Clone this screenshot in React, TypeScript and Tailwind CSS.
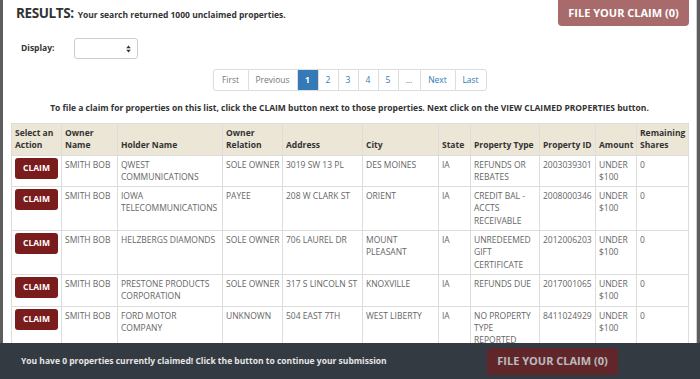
import React from 'react';

interface Row {
  owner: string;
  holder: string;
  relation: string;
  address: string;
  city: string;
  state: string;
  type: string;
  id: string;
  amount: string;
  shares: string;
}

const rows: Row[] = [
  { owner: 'SMITH BOB', holder: 'QWEST COMMUNICATIONS', relation: 'SOLE OWNER', address: '3019 SW 13 PL', city: 'DES MOINES', state: 'IA', type: 'REFUNDS OR REBATES', id: '2003039301', amount: 'UNDER $100', shares: '0' },
  { owner: 'SMITH BOB', holder: 'IOWA TELECOMMUNICATIONS', relation: 'PAYEE', address: '208 W CLARK ST', city: 'ORIENT', state: 'IA', type: 'CREDIT BAL - ACCTS RECEIVABLE', id: '2008000346', amount: 'UNDER $100', shares: '0' },
  { owner: 'SMITH BOB', holder: 'HELZBERGS DIAMONDS', relation: 'SOLE OWNER', address: '706 LAUREL DR', city: 'MOUNT PLEASANT', state: 'IA', type: 'UNREDEEMED GIFT CERTIFICATE', id: '2012006203', amount: 'UNDER $100', shares: '0' },
  { owner: 'SMITH BOB', holder: 'PRESTONE PRODUCTS CORPORATION', relation: 'SOLE OWNER', address: '317 S LINCOLN ST', city: 'KNOXVILLE', state: 'IA', type: 'REFUNDS DUE', id: '2017001065', amount: 'UNDER $100', shares: '0' },
  { owner: 'SMITH BOB', holder: 'FORD MOTOR COMPANY', relation: 'UNKNOWN', address: '504 EAST 7TH', city: 'WEST LIBERTY', state: 'IA', type: 'NO PROPERTY TYPE REPORTED', id: '8411024929', amount: 'UNDER $100', shares: '0' },
];

const colWidths = [50, 56, 105, 60, 80, 76, 32, 69, 56, 41, 52];
const headers = ['Select an Action', 'Owner Name', 'Holder Name', 'Owner Relation', 'Address', 'City', 'State', 'Property Type', 'Property ID', 'Amount', 'Remaining Shares'];
// right padding per data column (owner .. shares)
const cellPr = ['pr-px', 'pr-[6px]', 'pr-px', 'pr-px', 'pr-px', 'pr-px', 'pr-[6px]', 'pr-px', 'pr-px', 'pr-px'];

const pages = [
  { label: 'First', w: 'w-[34px]', muted: true },
  { label: 'Previous', w: 'w-[49px]', muted: true },
  { label: '1', w: 'w-[21px]', active: true },
  { label: '2', w: 'w-[20px]' },
  { label: '3', w: 'w-[20px]' },
  { label: '4', w: 'w-[20px]' },
  { label: '5', w: 'w-[20px]' },
  { label: '...', w: 'w-[22px]' },
  { label: 'Next', w: 'w-[35px]' },
  { label: 'Last', w: 'w-[31px]' },
];

function FileClaimButton({ className }: { className: string }) {
  return (
    <button className={`bg-[#7a1c1c] opacity-65 w-[131px] font-bold text-[11px] text-white ${className}`}>
      FILE YOUR CLAIM (0)
    </button>
  );
}

export default function App() {
  return (
    <div className="relative flex h-[379px] w-[700px] overflow-hidden bg-white font-['Open_Sans',sans-serif] text-[#333]">
      <div className="w-[3px] bg-[#5d5d5d]" />
      <div className="flex-1 flex flex-col">
        <div className="flex items-start justify-between">
          <div className="pl-[13px] pt-[3px] flex items-baseline gap-[4px]">
            <span className="text-[13.5px] font-bold tracking-[-0.4px]">RESULTS:</span>
            <span className="text-[8.5px] font-bold">Your search returned 1000 unclaimed properties.</span>
          </div>
          <FileClaimButton className="h-[26px] mr-[7px] rounded-b-[4px]" />
        </div>

        <div className="mt-[12px] flex items-center">
          <span className="ml-[18px] w-[53px] text-[8.5px] font-bold">Display:</span>
          <div className="relative h-[21px] w-[64px] rounded-[3px] border border-[#ccc] bg-white">
            <svg className="absolute right-[6px] top-[6px]" width="5" height="8" viewBox="0 0 5 8">
              <path d="M2.5 0.5 L4.8 3.3 H0.2 Z" fill="#333" />
              <path d="M2.5 7.5 L4.8 4.7 H0.2 Z" fill="#333" />
            </svg>
          </div>
        </div>

        <div className="mt-[10px] flex justify-center">
          <div className="flex h-[22px] rounded-[3px] border border-[#ddd] text-[8.5px]">
            {pages.map((p, i) => (
              <div
                key={p.label}
                className={`${p.w} flex items-center justify-center ${i > 0 ? 'border-l border-[#ddd]' : ''} ${
                  p.active ? 'bg-[#337ab7] text-white font-bold' : p.muted ? 'text-[#777]' : 'text-[#337ab7]'
                }`}
              >
                {p.label}
              </div>
            ))}
          </div>
        </div>

        <p className="mt-[11px] text-center text-[8.5px] font-bold leading-[12px]">
          To file a claim for properties on this list, click the CLAIM button next to those properties. Next click on the VIEW CLAIMED PROPERTIES button.
        </p>

        <table className="mt-[9px] ml-[8px] w-[677px] table-fixed border-collapse border border-[#ddd] text-[8.5px] leading-[12.3px]">
          <colgroup>
            {colWidths.map((w, i) => (
              <col key={i} style={{ width: w }} />
            ))}
          </colgroup>
          <thead>
            <tr className="bg-[#ece6d6]">
              {headers.map((h) => (
                <th key={h} className="border border-[#ddd] pl-[3px] pr-px py-[3px] text-left align-bottom font-bold text-[#333]">
                  {h}
                </th>
              ))}
            </tr>
          </thead>
          <tbody className="text-[#666]">
            {rows.map((r) => (
              <tr key={r.id}>
                <td className="border border-[#ddd] pl-[3px] pr-px pt-[2px] pb-[3px] align-top leading-none">
                  <button className="h-[21px] w-[43px] rounded-[3px] bg-[#7a1c1c] text-[8.5px] font-bold text-white">
                    CLAIM
                  </button>
                </td>
                {[r.owner, r.holder, r.relation, r.address, r.city, r.state, r.type, r.id, r.amount, r.shares].map((v, i) => (
                  <td key={i} className={`border border-[#ddd] pl-[3px] ${cellPr[i]} py-[3px] align-top`}>
                    {v}
                  </td>
                ))}
              </tr>
            ))}
          </tbody>
        </table>
      </div>
      <div className="w-px bg-[#cfcfcf]" />
      <div className="w-[3px] bg-[#5d5d5d]" />

      <div className="absolute bottom-0 left-0 right-0 flex h-[36px] items-center bg-[#343a42]">
        <span className="ml-[21px] w-[466px] text-[8.5px] font-bold text-[#e6e6e6]">
          You have 0 properties currently claimed! Click the button to continue your submission
        </span>
        <FileClaimButton className="h-[27px] rounded-[4px]" />
      </div>
    </div>
  );
}
